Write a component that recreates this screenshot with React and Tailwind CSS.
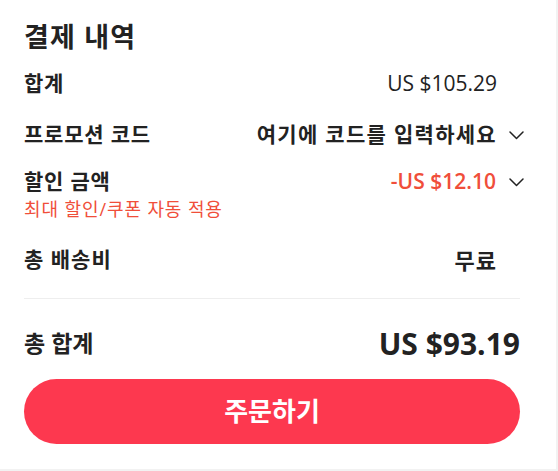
import React from "react";

function Chevron() {
  return (
    <svg width="15" height="9" viewBox="0 0 15 9" className="ml-[13px] -mr-[4px] shrink-0" fill="none">
      <polyline points="1,1 7.5,7.5 14,1" stroke="#222" strokeWidth="1.5" strokeLinecap="round" strokeLinejoin="round" />
    </svg>
  );
}

function Slot() {
  return <div className="w-[23px] shrink-0" />;
}

export default function App() {
  return (
    <div
      className="min-h-screen bg-[#f2f2f2] text-[#222]"
      style={{ fontFamily: '"Open Sans", "Noto Sans CJK KR", sans-serif' }}
    >
      <div className="w-[556px] h-[469px] bg-white pl-6 pr-[36px] pt-[13px] flex flex-col">
        <div className="h-[48px] flex items-center text-[27px] tracking-[1.2px] font-bold">결제 내역</div>

        <div className="h-[46px] flex items-center justify-between">
          <div className="text-[21px] tracking-[0.8px] font-semibold">합계</div>
          <div className="flex items-center">
            <div className="text-[21px] font-medium">US $105.29</div>
            <Slot />
          </div>
        </div>

        <div className="h-[56px] flex items-center justify-between">
          <div className="text-[21px] tracking-[0.8px] font-semibold">프로모션 코드</div>
          <div className="flex items-center">
            <div className="text-[21px] tracking-[1.3px] font-semibold mr-[-1px]">여기에 코드를 입력하세요</div>
            <Chevron />
          </div>
        </div>

        <div className="h-[72px] pt-[5px] flex justify-between">
          <div className="flex flex-col">
            <div className="h-[28px] flex items-center text-[21px] tracking-[0.8px] font-semibold">할인 금액</div>
            <div className="h-[24px] mt-[1px] flex items-center text-[18px] tracking-[0.9px] text-[#f04e3a]">최대 할인/쿠폰 자동 적용</div>
          </div>
          <div className="h-[28px] flex items-center">
            <div className="text-[21px] font-semibold text-[#f04e3a]">-US $12.10</div>
            <Chevron />
          </div>
        </div>

        <div className="h-[50px] flex items-center justify-between">
          <div className="text-[21px] tracking-[1px] font-semibold">총 배송비</div>
          <div className="flex items-center">
            <div className="text-[22px] tracking-[1px] font-bold">무료</div>
            <Slot />
          </div>
        </div>

        <div className="mt-[13px] border-t border-[#eeeeee]" />

        <div className="h-[80px] pt-[8px] flex items-center justify-between">
          <div className="text-[23px] font-semibold">총 합계</div>
          <div className="text-[30px] font-bold">US $93.19</div>
        </div>

        <button className="h-[65px] w-full rounded-full bg-[#fd384f] text-white text-[26px] font-bold flex items-center justify-center">
          주문하기
        </button>
      </div>
    </div>
  );
}
